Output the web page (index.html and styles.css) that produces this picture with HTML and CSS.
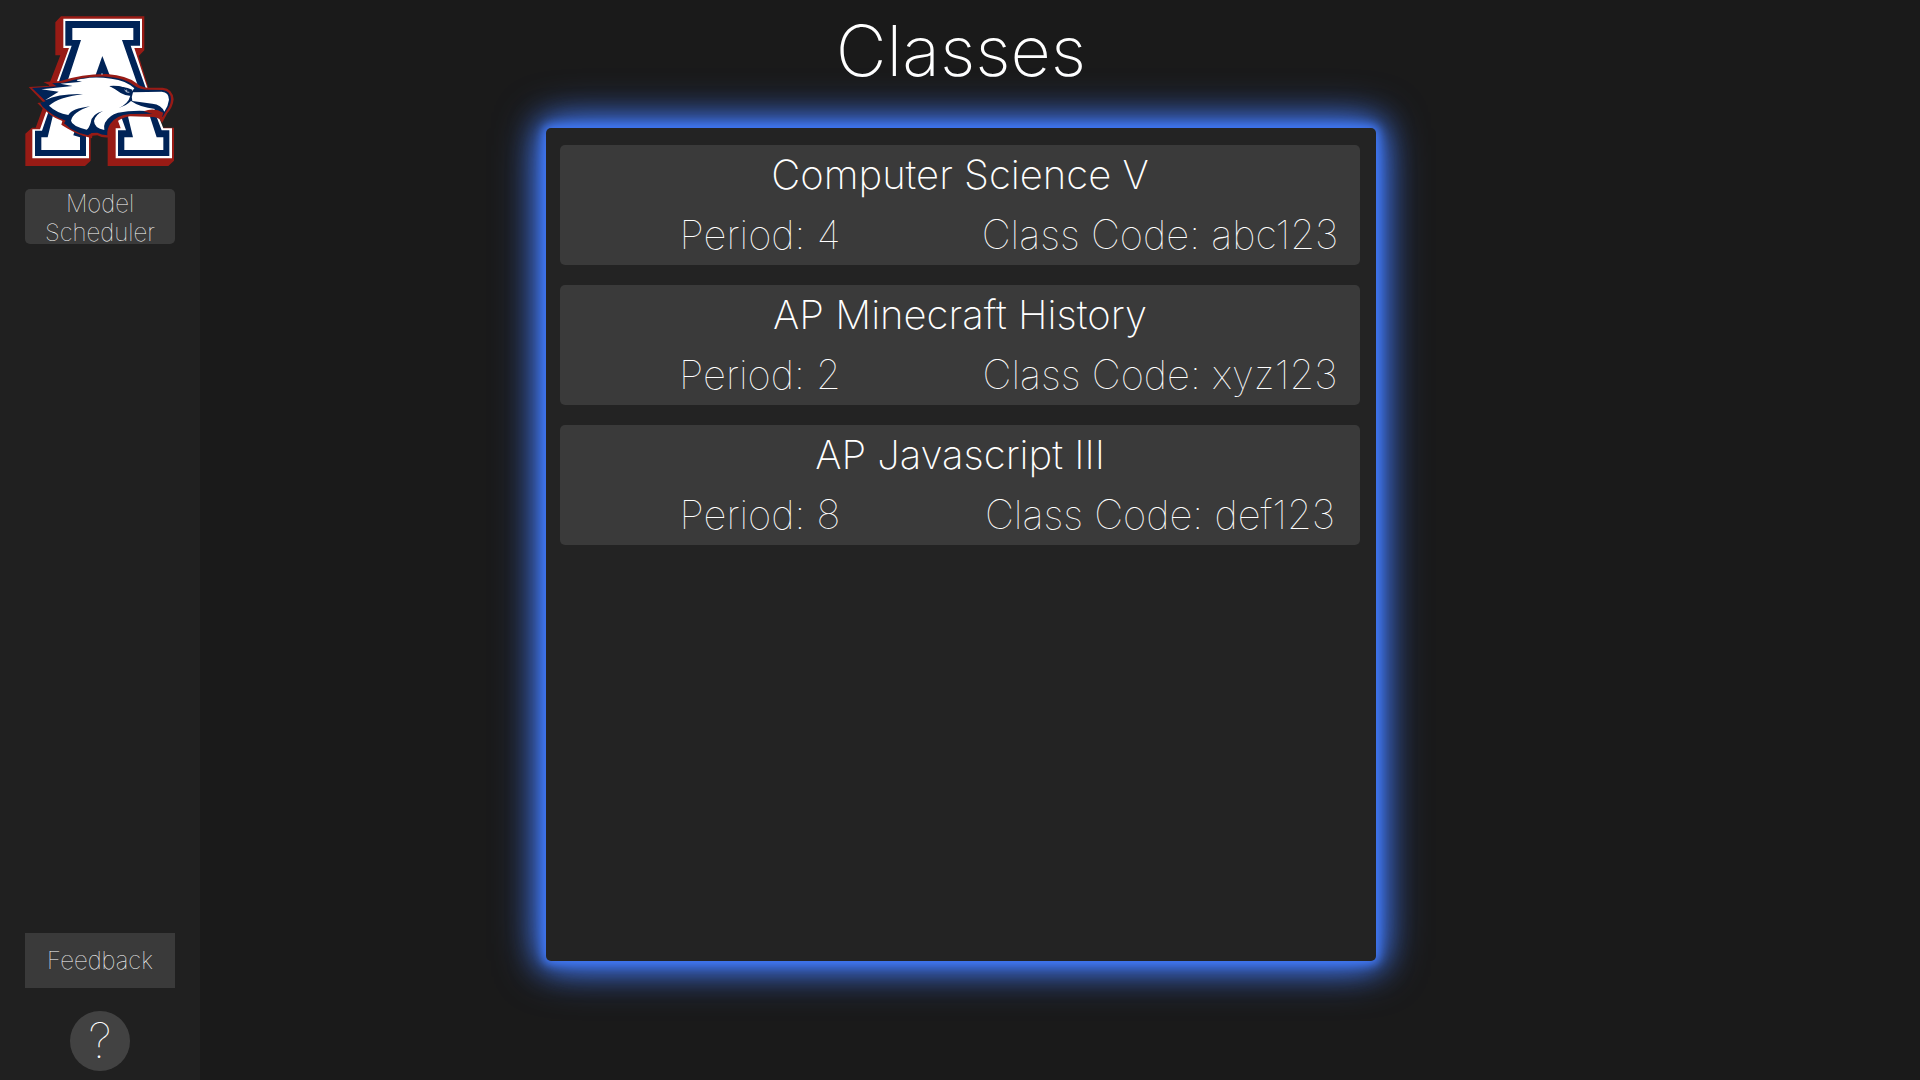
FILE: index.html
```html
<!DOCTYPE html>
<html lang="en">
<head>
<meta charset="utf-8">
<meta name="viewport" content="width=device-width, initial-scale=1">
<title>Classes</title>
<link rel="stylesheet" href="styles.css">
</head>
<body>
<aside class="sidebar">
  <a class="logo" href="#" aria-label="Home">
    <svg viewBox="75 47 450 452" aria-hidden="true">
      <!-- Block letter: red shadow, white edge, navy band, white face -->
      <path fill="#981b15" d="M183 48H433V150L416 167L446 265L475 345L487 382H522V481L505 497H323V392L330 370L345 300H250L272 400V481L255 497H76V400L96 382H107L133 310L150 245L181 165H166V66Z"/>
      <path fill="#fff" d="M190 55H426V143H403L443 265L490 384H516V474H347V384H362L350 350H250L267 395V474H97V387H120L168 250L207 143H190Z"/>
      <path fill="#002357" d="M196 62H420V136H392L438 265L485 390H508V467H354V390H378L362 345H240L258 390V467H105V391H126L178 240L215 136H196Z"/>
      <path fill="#fff" d="M217 83H400V119H366L415 260H205V235L243 119H217ZM160 340H240L220 405L240 411V449H124V411H143ZM382 340H447L470 411H490V449H373V411H399Z"/>
      <path fill="#002357" d="M307 167L332 232H284Z"/>
      <!-- Eagle head -->
      <path fill="#981b15" d="M86 260L152 256L130 245L182 242Q250 220 320 221Q384 226 412 250Q424 261 445 262L488 262Q518 265 521 297Q519 320 502 339L486 369Q482 352 461 350L390 348Q356 353 339 376Q328 390 329 411Q308 414 292 405L277 406L276 414Q249 408 228 398Q199 383 184 373L187 362Q150 350 112 308L130 306Z"/>
      <path fill="#002357" d="M96 263L170 258L156 249L190 247Q255 227 320 229Q374 232 404 256Q420 268 445 268L488 269Q512 272 513 297Q512 318 497 334L488 350Q480 340 459 340L390 341Q349 345 331 370Q320 386 322 405Q304 404 292 397L275 398L264 405Q235 399 213 386L192 369L197 361Q161 350 128 319L120 307L137 303Z"/>
      <path fill="#fff" d="M124 267L218 257L181 250L246 244Q212 239 251 235Q285 228 334 235Q378 240 403 264L395 274Q367 253 328 257Q346 266 362 278Q378 287 391 286Q385 310 356 323Q380 315 393 302Q420 321 465 326L460 333Q398 328 354 337Q328 344 315 367Q310 378 313 389Q283 384 282 362Q286 343 309 332Q276 340 272 367Q267 383 260 388Q215 376 213 361Q218 335 270 318Q215 325 205 344Q170 338 147 316Q175 291 249 281Q177 279 135 300Q160 283 176 274Z"/>
      <path fill="#fff" d="M399 276L485 274Q507 276 507 298Q505 316 493 334Q484 313 457 310L397 302Q393 290 399 276Z"/>
      <path fill="#981b15" d="M431 333Q462 321 490 337L485 354Q478 342 458 341Z"/>
      <path fill="#002357" d="M329 257Q365 255 397 268L394 281Q378 282 362 273Q347 263 329 257Z"/>
      <path fill="none" stroke="#fff" stroke-width="2" d="M374 268Q378 278 388 276M380 268V274M306 218V224"/>
    </svg>
  </a>
  <button class="side-button side-button-rounded" type="button">Model Scheduler</button>
  <button class="side-button side-button-last" type="button">Feedback</button>
  <button class="help" type="button" aria-label="Help">?</button>
</aside>
<main class="page">
  <h1 class="page-title">Classes</h1>
  <section class="class-list" aria-label="Classes">
    <article class="class-card">
      <h2 class="class-name">Computer Science V</h2>
      <p class="class-detail">Period: 4</p>
      <p class="class-detail">Class Code: abc123</p>
    </article>
    <article class="class-card">
      <h2 class="class-name">AP Minecraft History</h2>
      <p class="class-detail">Period: 2</p>
      <p class="class-detail">Class Code: xyz123</p>
    </article>
    <article class="class-card">
      <h2 class="class-name">AP Javascript III</h2>
      <p class="class-detail">Period: 8</p>
      <p class="class-detail">Class Code: def123</p>
    </article>
  </section>
</main>
</body>
</html>
```
FILE: styles.css
```css
* {
  box-sizing: border-box;
}

body {
  display: grid;
  grid-template-columns: 200px minmax(0, 1fr) 198px;
  min-height: 100vh;
  margin: 0;
  background: #1a1a1a;
  color: #fff;
  font-family: Inter, "Liberation Sans", sans-serif;
}

.sidebar {
  display: flex;
  flex-direction: column;
  align-items: center;
  padding: 16px 25px 9px;
  background: #202020;
}

.logo {
  width: 100%;
}

.logo svg {
  display: block;
  width: 100%;
}

button {
  border: 0;
  padding: 0;
  color: inherit;
  font-family: inherit;
  font-weight: 100;
  cursor: pointer;
}

.side-button {
  width: 100%;
  height: 55px;
  background: #3a3a3a;
  font-size: 24px;
  line-height: 29px;
}

.side-button-rounded {
  margin-top: 22px;
  border-radius: 5px;
}

.side-button-last {
  margin-top: auto;
}

.help {
  width: 60px;
  height: 60px;
  margin-top: 23px;
  border-radius: 50%;
  background: #424242;
  font-size: 48px;
  line-height: 60px;
}

.page {
  display: flex;
  flex-direction: column;
  align-items: center;
  padding: 7px 0 119px;
}

.page-title {
  margin: 0 0 33px;
  font-size: 70px;
  font-weight: 200;
  line-height: 88px;
}

.class-list {
  display: flex;
  flex: 1;
  flex-direction: column;
  gap: 20px;
  width: 100%;
  max-width: 830px;
  padding: 17px 16px 17px 14px;
  border-radius: 5px;
  background: #232323;
  box-shadow: 0 0 10px 3px #4178f5, 0 0 30px 6px #4178f5, 0 0 50px #4178f5;
}

.class-card {
  display: grid;
  grid-template-columns: 1fr 1fr;
  border-radius: 5px;
  background: #3a3a3a;
  font-size: 40px;
  line-height: 60px;
  text-align: center;
}

.class-name {
  grid-column: 1 / -1;
  margin: 0;
  font-size: 40px;
  font-weight: 200;
}

.class-detail {
  margin: 0;
  font-weight: 100;
}
```
